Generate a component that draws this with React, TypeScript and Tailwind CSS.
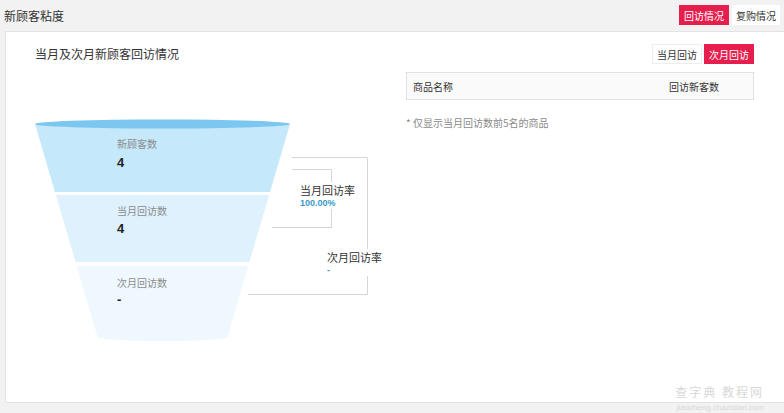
import React from "react";

const CJK = { fontFamily: '"Noto Sans CJK SC", "Noto Sans", sans-serif' };
const NUM = { fontFamily: '"Liberation Sans", Arial, sans-serif' };

// funnel half width along the slope
const CX = 127.5;
const hw = (y: number) => 127.5 - 0.294 * (y - 14);

function seg(y1: number, y2: number) {
  return `M${CX - hw(y1)},${y1} L${CX + hw(y1)},${y1} L${CX + hw(y2)},${y2} L${CX - hw(y2)},${y2} Z`;
}

function Funnel() {
  return (
    <div className="relative w-[360px] h-[240px]">
      <svg width="360" height="240" className="absolute left-0 top-0">
        <path d={seg(14, 82)} fill="#c6e8fb" />
        <ellipse cx={CX} cy={14} rx={127.5} ry={4.5} fill="#7cc7ef" />
        <path d={seg(85, 152)} fill="#def1fd" />
        <path d={seg(156, 227)} fill="#eef8fe" />
        <ellipse cx={CX} cy={227} rx={hw(227)} ry={4} fill="#eef8fe" />
        {/* outer bracket */}
        <path d="M257,47.5 H332.5 V184.5 H213" fill="none" stroke="#d6d6d6" strokeWidth="1" />
        {/* inner bracket */}
        <path d="M257,59.5 H296.5 V117.5 H237" fill="none" stroke="#d6d6d6" strokeWidth="1" />
      </svg>

      <div className="absolute left-[82px] top-[27px] text-[10px] leading-[14px] text-[#8c8c8c]" style={CJK}>新顾客数</div>
      <div className="absolute left-[82px] top-[45px] text-[13px] leading-[16px] font-bold text-[#222]" style={NUM}>4</div>
      <div className="absolute left-[82px] top-[94px] text-[10px] leading-[14px] text-[#8c8c8c]" style={CJK}>当月回访数</div>
      <div className="absolute left-[82px] top-[111px] text-[13px] leading-[16px] font-bold text-[#222]" style={NUM}>4</div>
      <div className="absolute left-[82px] top-[166px] text-[10px] leading-[14px] text-[#8c8c8c]" style={CJK}>次月回访数</div>
      <div className="absolute left-[82px] top-[182px] text-[13px] leading-[16px] font-bold text-[#222]" style={NUM}>-</div>

      <div className="absolute left-[265px] top-[72px] bg-white pr-[2px]">
        <div className="text-[11px] leading-[16px] text-[#333]" style={CJK}>当月回访率</div>
        <div className="text-[9px] leading-[11px] font-bold text-[#3b9ac6]" style={NUM}>100.00%</div>
      </div>
      <div className="absolute left-[292px] top-[139px] bg-white pr-[2px]">
        <div className="text-[11px] leading-[16px] text-[#333]" style={CJK}>次月回访率</div>
        <div className="text-[9px] leading-[11px] font-bold text-[#3b9ac6]" style={NUM}>-</div>
      </div>
    </div>
  );
}

export default function App() {
  return (
    <div className="relative w-[784px] h-[413px] bg-[#f2f2f2] overflow-hidden" style={CJK}>
      <div className="flex items-center justify-between h-[31px] pl-[4px] pr-[4px]">
        <div className="text-[12px] text-[#333]">新顾客粘度</div>
        <div className="flex gap-[3px] mt-[-1px]">
          <div className="h-[20px] px-[5px] flex items-center text-[10px] text-white bg-[#e61e4d]">回访情况</div>
          <div className="h-[20px] px-[4px] flex items-center text-[10px] text-[#333] bg-white">复购情况</div>
        </div>
      </div>

      <div className="ml-[5px] h-[372px] bg-white border-l border-t border-b border-[#e3e3e3] flex">
        <div className="flex-1 pl-[29px] pt-[14px]">
          <div className="text-[12px] leading-[16px] text-[#333]">当月及次月新顾客回访情况</div>
          <div className="mt-[48px]">
            <Funnel />
          </div>
        </div>

        <div className="w-[348px] mr-[30px] pt-[12px]">
          <div className="flex justify-end">
            <div className="h-[20px] w-[50px] flex items-center justify-center text-[10px] text-[#333] bg-white border border-[#eee]">当月回访</div>
            <div className="h-[20px] w-[50px] ml-[2px] flex items-center justify-center text-[10px] text-white bg-[#e61e4d]">次月回访</div>
          </div>
          <div className="mt-[8px] h-[28px] flex items-center justify-between bg-[#fafafa] border border-[#e2e2e2] pl-[6px] pr-[34px] text-[10px] text-[#333]">
            <span>商品名称</span>
            <span>回访新客数</span>
          </div>
          <div className="mt-[16px] text-[10px] leading-[14px] text-[#8a8a8a]">* 仅显示当月回访数前5名的商品</div>
        </div>
      </div>

      <div className="absolute right-[20px] bottom-[1px] flex flex-col items-end gap-[3px] text-[#d8d8d8]">
        <div className="text-[12px] leading-[17px] tracking-[2px]">查字典 教程网</div>
        <div className="text-[8px] leading-[9px]" style={NUM}>jiaocheng.chazidian.com</div>
      </div>
    </div>
  );
}
